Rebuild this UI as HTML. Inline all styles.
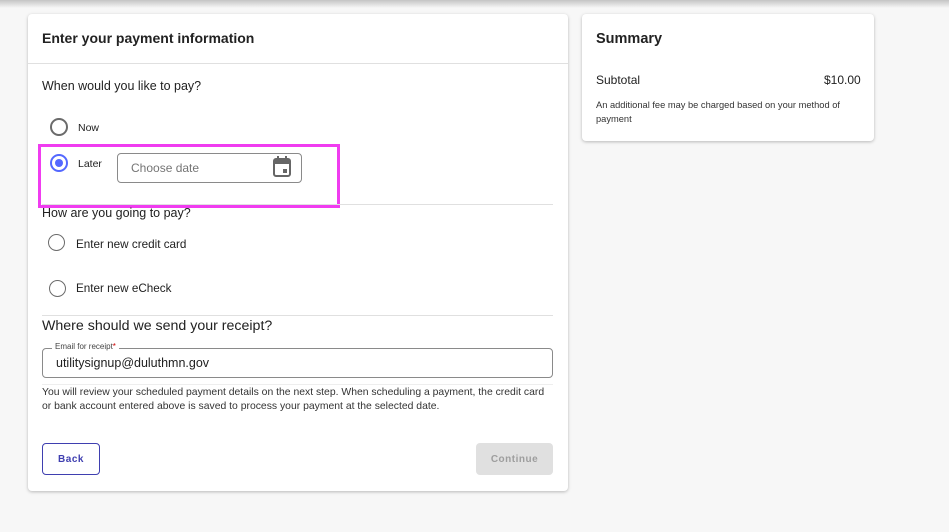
<!DOCTYPE html>
<html><head><style>
*{margin:0;padding:0;box-sizing:border-box}
body{width:949px;height:532px;background:#f7f7f7;font-family:"Liberation Sans",sans-serif;color:#212121;position:relative;overflow:hidden}
.a{position:absolute;white-space:nowrap}
.card{position:absolute;background:#fff;border-radius:4px;box-shadow:0 1px 3px rgba(0,0,0,.25)}
.rad{position:absolute;width:18px;height:18px;border:2px solid #6b6b6b;border-radius:50%}
.hr{position:absolute;height:1px;background:#e0e0e0}
</style></head><body>
<div class="a" style="left:0;top:0;width:949px;height:8px;background:linear-gradient(#c4c4c4,#f7f7f7)"></div>
<div class="card" style="left:28px;top:14px;width:540px;height:477px"></div>
<div class="a" style="left:42px;top:30px;font-size:14px;font-weight:bold;color:#222">Enter your payment information</div>
<div class="hr" style="left:28px;top:63px;width:540px"></div>
<div class="a" style="left:42px;top:79px;font-size:12.5px">When would you like to pay?</div>
<div class="rad" style="left:50px;top:118px"></div>
<div class="a" style="left:78px;top:122px;font-size:10.5px">Now</div>
<div class="rad" style="left:50px;top:154px;border-color:#5468ff"><div style="position:absolute;left:3px;top:3px;width:8px;height:8px;border-radius:50%;background:#5468ff"></div></div>
<div class="a" style="left:78px;top:158px;font-size:10.5px">Later</div>
<div class="a" style="left:117px;top:153px;width:185px;height:30px;border:1px solid #8a8a8a;border-radius:4px"></div>
<div class="a" style="left:131px;top:161px;font-size:12px;color:#757575">Choose date</div>
<svg class="a" style="left:272px;top:156px" width="20" height="22" viewBox="0 0 20 22"><rect x="2" y="3" width="16" height="17" rx="2" fill="none" stroke="#666" stroke-width="2"/><rect x="2" y="3" width="16" height="5" fill="#666"/><rect x="5" y="0" width="2" height="4" fill="#666"/><rect x="13" y="0" width="2" height="4" fill="#666"/><rect x="11" y="13" width="4" height="4" fill="#666"/></svg>
<div class="a" style="left:38px;top:144px;width:302px;height:64px;border:3px solid #f03cf0"></div>
<div class="hr" style="left:42px;top:204px;width:511px"></div>
<div class="a" style="left:42px;top:206px;font-size:12.5px">How are you going to pay?</div>
<div class="rad" style="left:48px;top:234px;width:17px;height:17px;border-width:1.5px"></div>
<div class="a" style="left:76px;top:238px;font-size:11.7px">Enter new credit card</div>
<div class="rad" style="left:49px;top:280px;width:17px;height:17px;border-width:1.5px"></div>
<div class="a" style="left:76px;top:282px;font-size:11.7px">Enter new eCheck</div>
<div class="hr" style="left:42px;top:315px;width:511px"></div>
<div class="a" style="left:42px;top:318px;font-size:14.2px">Where should we send your receipt?</div>
<div class="a" style="left:42px;top:348px;width:511px;height:30px;border:1px solid #8a8a8a;border-radius:4px"></div>
<div class="a" style="left:52px;top:342px;font-size:8px;background:#fff;padding:0 3px;color:#444">Email for receipt<span style="color:#c00">*</span></div>
<div class="a" style="left:56px;top:356px;font-size:12.5px">utilitysignup@duluthmn.gov</div>
<div class="hr" style="left:42px;top:384px;width:511px;background:#eee"></div>
<div class="a" style="left:42px;top:386px;font-size:10.4px;line-height:14px;color:#333">You will review your scheduled payment details on the next step. When scheduling a payment, the credit card<br>or bank account entered above is saved to process your payment at the selected date.</div>
<div class="a" style="left:42px;top:443px;width:58px;height:32px;border:1px solid #3f3fb0;border-radius:4px;font-size:10px;font-weight:bold;color:#3f3fb0;text-align:center;line-height:32px;letter-spacing:.5px">Back</div>
<div class="a" style="left:476px;top:443px;width:77px;height:32px;background:#e0e0e0;border-radius:4px;font-size:10px;font-weight:bold;color:#9e9e9e;text-align:center;line-height:33px;letter-spacing:.5px">Continue</div>
<div class="card" style="left:582px;top:14px;width:292px;height:127px"></div>
<div class="a" style="left:596px;top:31px;font-size:14.5px;font-weight:bold;color:#222">Summary</div>
<div class="a" style="left:596px;top:73px;font-size:12px">Subtotal</div>
<div class="a" style="left:824px;top:73px;font-size:12px">$10.00</div>
<div class="a" style="left:596px;top:98px;font-size:9.3px;line-height:14px;color:#333">An additional fee may be charged based on your method of<br>payment</div>
</body></html>
